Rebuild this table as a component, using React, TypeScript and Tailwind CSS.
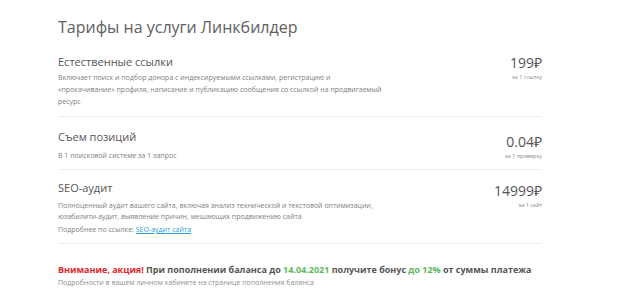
import React from "react";

const Price = ({ price, unit }: { price: string; unit: string }) => (
  <div className="flex flex-col items-end shrink-0">
    <div className="text-[14px] leading-[16px] text-[#555555]">{price}</div>
    <div className="text-[5.5px] leading-[8px] text-[#888888] mt-[2px]">{unit}</div>
  </div>
);

export default function App() {
  return (
    <div className="w-[624px] h-[298px] bg-white overflow-hidden" style={{ fontFamily: '"Open Sans", sans-serif' }}>
      <div className="ml-[58px] w-[484px] pt-[14px]">
        <h1 className="text-[16px] leading-[26px] font-normal text-[#606060]">Тарифы на услуги Линкбилдер</h1>
        <div className="mt-[15px]">
          <div className="pb-[8px] border-b border-[#eeeeee] flex justify-between">
            <div className="w-[330px]">
              <div className="text-[11px] leading-[14px] text-[#555555]">Естественные ссылки</div>
              <div className="mt-[3px] text-[7px] leading-[12px] text-[#808080]">
                Включает поиск и подбор донора с индексируемыми ссылками, регистрацию и «прокачивание» профиля, написание и публикацию сообщения со ссылкой на продвигаемый ресурс
              </div>
            </div>
            <Price price="199₽" unit="за 1 ссылку" />
          </div>
          <div className="pt-[13px] pb-[7px] border-b border-[#eeeeee] flex justify-between">
            <div>
              <div className="text-[11px] leading-[14px] text-[#555555]">Съем позиций</div>
              <div className="mt-[6px] text-[7px] leading-[12px] text-[#808080]">В 1 поисковой системе за 1 запрос</div>
            </div>
            <div className="pt-[4px]">
              <Price price="0.04₽" unit="за 1 проверку" />
            </div>
          </div>
          <div className="pt-[11px] pb-[7px] border-b border-[#eeeeee] flex justify-between">
            <div className="w-[330px]">
              <div className="text-[11px] leading-[14px] text-[#555555]">SEO-аудит</div>
              <div className="mt-[5px] text-[7px] leading-[11px] text-[#808080]">
                Полноценный аудит вашего сайта, включая анализ технической и текстовой оптимизации, юзабилити-аудит, выявление причин, мешающих продвижению сайта
              </div>
              <div className="mt-[2px] text-[7px] leading-[12px] text-[#808080]">
                Подробнее по ссылке: <a className="text-[#2a9fd6] underline">SEO-аудит сайта</a>
              </div>
            </div>
            <div className="pt-[2px]">
              <Price price="14999₽" unit="за 1 сайт" />
            </div>
          </div>
        </div>
        <div className="mt-[19px] text-[9px] leading-[14px] font-bold text-[#555555] whitespace-nowrap">
          <span className="text-[#e32229]">Внимание, акция!</span> При пополнении баланса до <span className="text-[#5cb85c]">14.04.2021</span> получите бонус <span className="text-[#5cb85c]">до 12%</span> от суммы платежа
        </div>
        <div className="mt-[1px] text-[7px] leading-[10px] text-[#909090] whitespace-nowrap">Подробности в вашем личном кабинете на странице пополнения баланса</div>
      </div>
    </div>
  );
}
